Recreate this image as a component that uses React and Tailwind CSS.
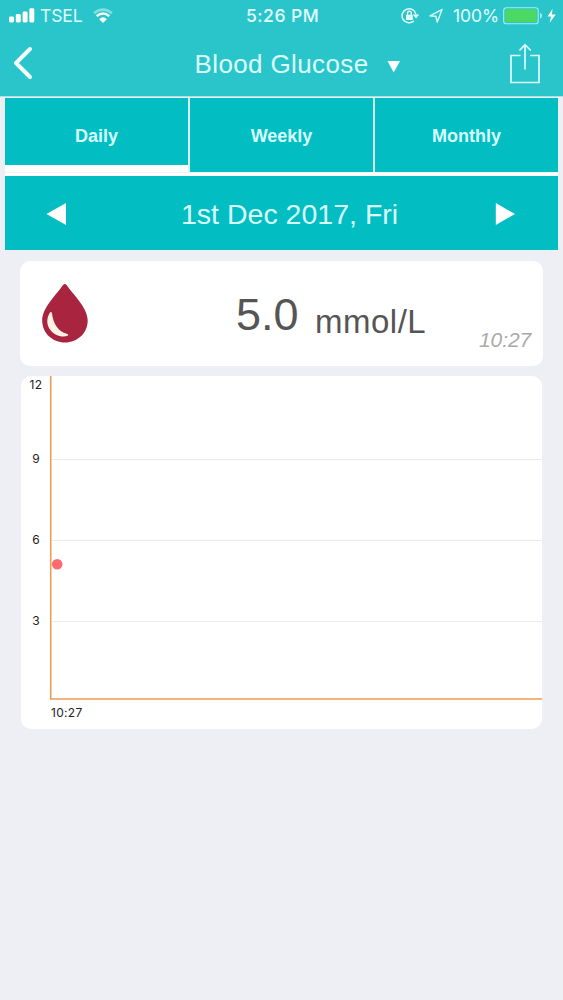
import React from "react";

function StatusBar() {
  return (
    <div className="flex h-8 w-full items-center font-['Inter','Liberation_Sans',sans-serif] text-[#e2ffff]">
      <svg className="-mt-0.5 ml-[9px] h-4 w-[26px] shrink-0" viewBox="0 0 26 16" fill="#fff">
        <rect x="0" y="9.5" width="5" height="6" rx="1.4" />
        <rect x="6.8" y="7" width="5" height="8.5" rx="1.4" />
        <rect x="13.6" y="4.5" width="5" height="11" rx="1.4" />
        <rect x="20.3" y="1.2" width="5" height="14.3" rx="1.4" />
      </svg>
      <div className="ml-[5px] w-[53px] text-[17.5px] leading-none tracking-[-0.1px]">TSEL</div>
      <svg className="h-4 w-5 shrink-0" viewBox="0 0 20 16" fill="none" strokeWidth="2.5">
        <path d="M1 5.3Q10 -2 19 5.3" stroke="#7fdfe2" />
        <path d="M3.7 8.1Q10 2.8 16.3 8.1" stroke="#fff" />
        <path d="M6.2 11.2Q10 7.5 13.8 11.2L10 15Z" fill="#fff" />
      </svg>
      <div className="ml-[133px] w-[155px] whitespace-nowrap text-[17.5px] font-medium leading-none tracking-[0.5px]">5:26 PM</div>
      <svg className="-mt-px h-[18px] w-[18px] shrink-0" viewBox="0 0 18 18" fill="none" stroke="#e2ffff" strokeWidth="1.5">
        <path d="M12.9 13.9A7 7 0 1 1 15 7.6" />
        <path d="M11.8 7.6H18.2L15.1 11.6Z" fill="#e2ffff" stroke="none" />
        <rect x="5" y="7.7" width="6.8" height="5.2" rx="0.6" fill="#e2ffff" stroke="none" />
        <path d="M6.5 8V6.2a1.9 1.9 0 0 1 3.8 0V8" strokeWidth="1.4" />
      </svg>
      <svg className="-mt-px ml-[9px] h-4 w-4 shrink-0" viewBox="0 0 16 16" fill="none" stroke="#e2ffff" strokeWidth="1.4" strokeLinejoin="round">
        <path d="M14 1.5L2 7.9L7.8 8.3L9.3 14Z" />
      </svg>
      <div className="ml-[9px] w-[50px] whitespace-nowrap text-[17.5px] leading-none tracking-[-0.05px]">100%</div>
      <svg className="h-[18px] w-[54px] shrink-0" viewBox="0 0 54 18">
        <rect x="0.7" y="0.7" width="34.5" height="16" rx="2.8" fill="none" stroke="#a6eeee" strokeWidth="1.1" />
        <rect x="2.3" y="2.3" width="31.3" height="12.8" rx="1.2" fill="#4bd964" />
        <path d="M37 6Q39 6.3 39 8.8Q39 11.2 37 11.6Z" fill="#a6eeee" />
        <path d="M49.5 1.8L44.6 9.5H48L46.7 15.7L52.7 7.5H48.9Z" fill="#fff" />
      </svg>
    </div>
  );
}

function NavBar() {
  return (
    <div className="flex h-16 w-full items-center">
      <svg className="-mt-0.5 ml-3 h-9 w-6 shrink-0" viewBox="0 0 24 36" fill="none" stroke="#f2ffff" strokeWidth="4" strokeLinecap="round" strokeLinejoin="round">
        <path d="M18 4L4 18L18 32" />
      </svg>
      <div className="ml-[158.5px] w-[192.5px] whitespace-nowrap font-['Liberation_Sans',Arial,sans-serif] text-[26px] leading-none tracking-[0.38px] text-[#dcffff]">
        Blood Glucose
      </div>
      <svg className="mt-[5px] h-3 w-[13px] shrink-0" viewBox="0 0 13 12">
        <path d="M0.5 0H13L6.7 11.5Z" fill="#fff" />
      </svg>
      <svg className="ml-[108.5px] h-[42px] w-8 shrink-0" viewBox="0 0 32 42" fill="none" stroke="#dffdfd" strokeWidth="1.7">
        <path d="M11.5 12.5H2V39.5H30V12.5H21" />
        <path d="M16 26.5V1.5M10.5 7.5L16 1.7L21.8 7.5" />
      </svg>
    </div>
  );
}

function Tabs() {
  return (
    <div className="mx-[5px] mt-px grid h-[75px] grid-cols-[183px_183px_183px] gap-x-[2px] border-b border-[#e9f9f9] bg-[#d4f5f6] text-center font-['Liberation_Sans',Arial,sans-serif] text-[18px] font-bold text-[#d8ffff]">
      <div className="border-b-[7px] border-white bg-[#02bdc2] pt-[25px] leading-[26px]">Daily</div>
      <div className="bg-[#02bdc2] pt-[25px] leading-[26px]">Weekly</div>
      <div className="bg-[#02bdc2] pt-[25px] leading-[26px]">Monthly</div>
    </div>
  );
}

function DateBar() {
  return (
    <div className="mx-[5px] flex h-[77px] items-center border-t-[3px] border-white bg-[#02bdc2]">
      <svg className="ml-[41px] mt-0.5 h-[22px] w-5 shrink-0" viewBox="0 0 20 22">
        <path d="M20 0V22L0.5 11Z" fill="#fff" />
      </svg>
      <div className="ml-[115px] mt-[3px] w-[314px] whitespace-nowrap font-['Liberation_Sans',Arial,sans-serif] text-[28.5px] leading-none tracking-[0.01px] text-[#d9ffff]">
        1st Dec 2017, Fri
      </div>
      <svg className="mt-0.5 h-[22px] w-5 shrink-0" viewBox="0 0 20 22">
        <path d="M0.8 0V22L20 11Z" fill="#fff" />
      </svg>
    </div>
  );
}

function Reading() {
  return (
    <div className="ml-5 mt-[11px] flex h-[105px] w-[523px] rounded-[10px] bg-white font-['Liberation_Sans',Arial,sans-serif]">
      <svg className="ml-[22px] mt-[22px] h-[60px] w-[46px] shrink-0" viewBox="0 0 46 60">
        <path d="M21 2Q22.8 0 24.6 2C31 11.5 45.7 24.5 45.7 37.5C45.7 50 35.5 59.5 23 59.5S.2 50 .2 37.5C.2 24.5 14.7 11.5 21 2Z" fill="#a9243f" />
        <path d="M8 29.5C4.6 34.5 4.2 41.8 8.2 46.8C12.5 52.9 20.8 55 26 52.6Q27 51.4 24.8 50.8C16.5 48.5 11.2 41 10 30.4Q9.3 28.3 8 29.5Z" fill="#fff3e7" />
      </svg>
      <div className="ml-[148px] flex h-[78px] w-[243px] items-end whitespace-nowrap text-[#555]">
        <span className="w-[79px] text-[45px] leading-[48px]">5.0</span>
        <span className="text-[33px] leading-[34px] tracking-[0.5px]">mmol/L</span>
      </div>
      <span className="mt-[67px] text-[21px] italic leading-[24px] tracking-[-0.1px] text-[#aaa]">10:27</span>
    </div>
  );
}

const ticks = [
  { label: "12", y: 9, x: 15 },
  { label: "9", y: 82.5, x: 15 },
  { label: "6", y: 163.5, x: 15 },
  { label: "3", y: 244.5, x: 15 },
];

function Chart() {
  return (
    <div className="ml-[21px] mt-[10px] h-[353px] w-[521px] overflow-hidden rounded-[10px] bg-white">
      <svg className="block" width="521" height="353" viewBox="0 0 521 353">
        <g fill="#e9eaeb">
          <rect x="31" y="83" width="490" height="1" />
          <rect x="31" y="164" width="490" height="1" />
          <rect x="31" y="245" width="490" height="1" />
        </g>
        <path d="M29.7 0V323H521" fill="none" stroke="#ef9b55" strokeWidth="1.6" />
        <circle cx="36.2" cy="188.3" r="5.3" fill="#fb6b70" />
        <g className="font-['Inter','Liberation_Sans',sans-serif] text-[12px] tracking-[0.3px]" fill="#222">
          {ticks.map((t) => (
            <text key={t.label} x={t.x} y={t.y + 4} textAnchor="middle">{t.label}</text>
          ))}
          <text x="30" y="341">10:27</text>
        </g>
      </svg>
    </div>
  );
}

export default function App() {
  return (
    <div className="h-[1000px] w-[563px] overflow-hidden bg-[#eeeff4]">
      <header className="h-[97px] border-b border-[#a9e5e8] bg-[#2ac5ca]">
        <StatusBar />
        <NavBar />
      </header>
      <Tabs />
      <DateBar />
      <Reading />
      <Chart />
    </div>
  );
}
